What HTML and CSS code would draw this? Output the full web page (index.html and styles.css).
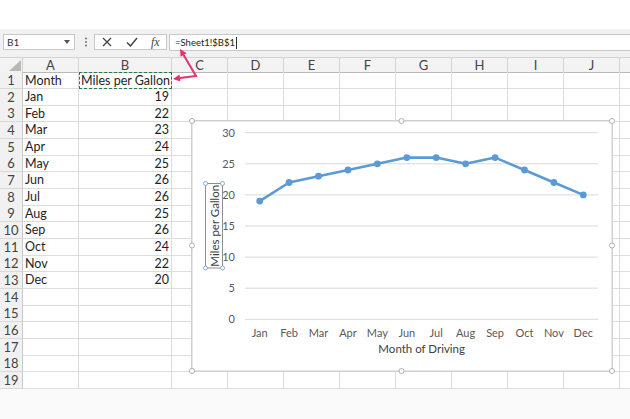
FILE: index.html
```html
<!DOCTYPE html>
<html>
<head>
<meta charset="utf-8">
<title>Miles per Gallon</title>
<link rel="stylesheet" href="styles.css">
</head>
<body>
<div class="topband"></div>
<div class="fbar">
  <div class="namebox"><span>B1</span><svg class="dd" width="6" height="4" viewBox="0 0 6 4"><path d="M0 0h6L3 4z" fill="#555"/></svg></div>
  <svg class="vdots" width="4" height="10" viewBox="0 0 4 10"><circle cx="2" cy="1.5" r="0.9" fill="#666"/><circle cx="2" cy="5" r="0.9" fill="#666"/><circle cx="2" cy="8.5" r="0.9" fill="#666"/></svg>
  <div class="btns">
    <svg class="ico" width="10" height="10" viewBox="0 0 10 10"><path d="M1 1L9 9M9 1L1 9" stroke="#444" stroke-width="1.3" fill="none"/></svg>
    <svg class="ico" width="12" height="10" viewBox="0 0 12 10"><path d="M1 5.5L4.5 9L11 1" stroke="#444" stroke-width="1.5" fill="none"/></svg>
    <span class="fx">fx</span>
  </div>
  <div class="formula"><span>=Sheet1!$B$1</span><span class="caret"></span></div>
</div>
<div class="sheet">
  <div class="row hdr">
    <div class="corner"><svg width="12" height="11" viewBox="0 0 12 11"><path d="M12 0V11H0z" fill="#b9b9b9"/></svg></div>
    <div class="ch">A</div>
    <div class="ch">B</div>
    <div class="chs"><span>C</span><span>D</span><span>E</span><span>F</span><span>G</span><span>H</span><span>I</span><span>J</span></div>
  </div>
  <div class="row"><div class="rh">1</div><div class="c">Month</div><div class="c sel">Miles per Gallon</div><div class="rest"></div></div>
  <div class="row"><div class="rh">2</div><div class="c">Jan</div><div class="c num">19</div><div class="rest"></div></div>
  <div class="row"><div class="rh">3</div><div class="c">Feb</div><div class="c num">22</div><div class="rest"></div></div>
  <div class="row"><div class="rh">4</div><div class="c">Mar</div><div class="c num">23</div><div class="rest"></div></div>
  <div class="row"><div class="rh">5</div><div class="c">Apr</div><div class="c num">24</div><div class="rest"></div></div>
  <div class="row"><div class="rh">6</div><div class="c">May</div><div class="c num">25</div><div class="rest"></div></div>
  <div class="row"><div class="rh">7</div><div class="c">Jun</div><div class="c num">26</div><div class="rest"></div></div>
  <div class="row"><div class="rh">8</div><div class="c">Jul</div><div class="c num">26</div><div class="rest"></div></div>
  <div class="row"><div class="rh">9</div><div class="c">Aug</div><div class="c num">25</div><div class="rest"></div></div>
  <div class="row"><div class="rh">10</div><div class="c">Sep</div><div class="c num">26</div><div class="rest"></div></div>
  <div class="row"><div class="rh">11</div><div class="c">Oct</div><div class="c num">24</div><div class="rest"></div></div>
  <div class="row"><div class="rh">12</div><div class="c">Nov</div><div class="c num">22</div><div class="rest"></div></div>
  <div class="row"><div class="rh">13</div><div class="c">Dec</div><div class="c num">20</div><div class="rest"></div></div>
  <div class="row"><div class="rh">14</div><div class="c"></div><div class="c"></div><div class="rest"></div></div>
  <div class="row"><div class="rh">15</div><div class="c"></div><div class="c"></div><div class="rest"></div></div>
  <div class="row"><div class="rh">16</div><div class="c"></div><div class="c"></div><div class="rest"></div></div>
  <div class="row"><div class="rh">17</div><div class="c"></div><div class="c"></div><div class="rest"></div></div>
  <div class="row"><div class="rh">18</div><div class="c"></div><div class="c"></div><div class="rest"></div></div>
  <div class="row"><div class="rh">19</div><div class="c"></div><div class="c"></div><div class="rest"></div></div>
</div>
<div class="below"></div>

<div class="chart">
  <svg class="chartsvg" width="422" height="252" viewBox="0 0 422 252">
    <rect x="0.75" y="0.75" width="420.5" height="250.5" fill="#fff" stroke="#cfcfcf" stroke-width="1.5"/>
    <g stroke="#d9d9d9" stroke-width="1">
      <line x1="54" x2="407" y1="12.7" y2="12.7"/>
      <line x1="54" x2="407" y1="43.8" y2="43.8"/>
      <line x1="54" x2="407" y1="74.9" y2="74.9"/>
      <line x1="54" x2="407" y1="106" y2="106"/>
      <line x1="54" x2="407" y1="137.1" y2="137.1"/>
      <line x1="54" x2="407" y1="168.2" y2="168.2"/>
      <line x1="54" x2="407" y1="199.3" y2="199.3"/>
    </g>
    <g class="ylab" text-anchor="end">
      <text x="44" y="16.7">30</text>
      <text x="44" y="47.8">25</text>
      <text x="44" y="78.9">20</text>
      <text x="44" y="110">15</text>
      <text x="44" y="141.1">10</text>
      <text x="44" y="172.2">5</text>
      <text x="44" y="203.3">0</text>
    </g>
    <g class="xlab" text-anchor="middle">
      <text x="68.7" y="216.5">Jan</text>
      <text x="98.1" y="216.5">Feb</text>
      <text x="127.5" y="216.5">Mar</text>
      <text x="157" y="216.5">Apr</text>
      <text x="186.4" y="216.5">May</text>
      <text x="215.8" y="216.5">Jun</text>
      <text x="245.2" y="216.5">Jul</text>
      <text x="274.6" y="216.5">Aug</text>
      <text x="304.1" y="216.5">Sep</text>
      <text x="333.5" y="216.5">Oct</text>
      <text x="362.9" y="216.5">Nov</text>
      <text x="392.3" y="216.5">Dec</text>
    </g>
    <text class="xtitle" x="230.7" y="233" text-anchor="middle">Month of Driving</text>
    <polyline fill="none" stroke="#5b9bd5" stroke-width="2.6" stroke-linejoin="round" points="68.7,81.1 98.1,62.5 127.5,56.2 157,50 186.4,43.8 215.8,37.6 245.2,37.6 274.6,43.8 304.1,37.6 333.5,50 362.9,62.5 392.3,74.9"/>
    <g fill="#5b9bd5">
      <circle cx="68.7" cy="81.1" r="3.4"/>
      <circle cx="98.1" cy="62.5" r="3.4"/>
      <circle cx="127.5" cy="56.2" r="3.4"/>
      <circle cx="157" cy="50" r="3.4"/>
      <circle cx="186.4" cy="43.8" r="3.4"/>
      <circle cx="215.8" cy="37.6" r="3.4"/>
      <circle cx="245.2" cy="37.6" r="3.4"/>
      <circle cx="274.6" cy="43.8" r="3.4"/>
      <circle cx="304.1" cy="37.6" r="3.4"/>
      <circle cx="333.5" cy="50" r="3.4"/>
      <circle cx="362.9" cy="62.5" r="3.4"/>
      <circle cx="392.3" cy="74.9" r="3.4"/>
    </g>
    <rect x="14.5" y="63.5" width="17" height="84.5" fill="#fff" stroke="#8f8f8f" stroke-width="1"/>
    <text class="ytitle" transform="translate(23 105.7) rotate(-90)" text-anchor="middle" dominant-baseline="central">Miles per Gallon</text>
    <g fill="#fff" stroke="#7d9ec4" stroke-width="0.9">
      <circle cx="14.5" cy="63.5" r="2"/>
      <circle cx="31.5" cy="63.5" r="2"/>
      <circle cx="14.5" cy="148" r="2"/>
      <circle cx="31.5" cy="148" r="2"/>
    </g>
    <g fill="#fff" stroke="#a8a8a8" stroke-width="0.9">
      <circle cx="1" cy="1" r="2.5"/>
      <circle cx="210.5" cy="1" r="2.5"/>
      <circle cx="421" cy="1" r="2.5"/>
      <circle cx="1" cy="125.5" r="2.5"/>
      <circle cx="421" cy="125.5" r="2.5"/>
      <circle cx="1" cy="251" r="2.5"/>
      <circle cx="210.5" cy="251" r="2.5"/>
      <circle cx="421" cy="251" r="2.5"/>
    </g>
  </svg>
</div>

<svg class="arrow" width="40" height="42" viewBox="0 0 40 42">
  <path d="M18.6 11L31 32L14.9 34.1" fill="none" stroke="#e2336b" stroke-width="2" stroke-linejoin="miter"/>
  <path d="M15 5L21.6 9.2L15.6 12.8z" fill="#e2336b"/>
  <path d="M8 35L15.4 37.6L14.5 30.6z" fill="#e2336b"/>
</svg>
</body>
</html>
```

FILE: styles.css
```css
* { box-sizing: border-box; margin: 0; padding: 0; }
html, body { width: 630px; height: 419px; overflow: hidden; background: #fff; }
body { position: relative; font-family: Lato, "Liberation Sans", sans-serif; color: #222; }

.topband { height: 29px; background: #fff; }

.fbar {
  height: 28px;
  background: #f1f1f1;
  display: flex;
  align-items: flex-start;
  padding: 5px 0 0 3px;
}
.namebox {
  width: 72px; height: 16px;
  background: #fff;
  border: 1px solid #c9c9c9;
  display: flex; align-items: center; justify-content: space-between;
  padding: 0 4px 0 3px;
  font-size: 10px; color: #333;
}
.vdots { margin: 3px 0 0 9px; }
.btns {
  margin-left: 6px;
  width: 73px; height: 16px;
  background: #fff;
  border: 1px solid #c9c9c9;
  display: flex; align-items: center;
  padding-left: 7px; gap: 14px;
}
.fx { font-family: "Liberation Serif", serif; font-style: italic; font-size: 12px; color: #444; margin-left: -1px; }
.formula {
  margin-left: 2px;
  flex: 1; height: 17px;
  background: #fff;
  border: 1px solid #c9c9c9; border-right: none;
  display: flex; align-items: center;
  padding-left: 5px;
  font-size: 9.5px; color: #222;
}
.caret { width: 1px; height: 12px; background: #333; margin-left: 1px; }

.sheet { display: flex; flex-direction: column; }
.row {
  display: grid;
  grid-template-columns: 23px 56px 93px 1fr;
  height: 16.67px;
  font-size: 12.5px;
}
.row.hdr { height: 15px; background: #f3f3f3; border-top: 1px solid #d2d2d2; color: #444; font-size: 13px; }
.corner { border-right: 1px solid #cfcfcf; border-bottom: 1px solid #b8b8b8; display: flex; align-items: flex-end; justify-content: flex-end; padding: 0 1px 1px 0; }
.ch { border-right: 1px solid #d6d6d6; border-bottom: 1px solid #b8b8b8; display: flex; align-items: center; justify-content: center; line-height: 14px; }
.chs { display: flex; border-bottom: 1px solid #b8b8b8; }
.chs span { flex: 0 0 56px; border-right: 1px solid #d6d6d6; display: flex; align-items: center; justify-content: center; line-height: 14px; }

.rh {
  background: #f1f1f1;
  border-right: 1px solid #c9c9c9;
  border-bottom: 1px solid #d9d9d9;
  color: #444; font-size: 13px;
  display: flex; align-items: center; justify-content: center;
}
.c {
  border-right: 1px solid #dcdcdc;
  border-bottom: 1px solid #dcdcdc;
  display: flex; align-items: center;
  padding: 0 2px;
  white-space: nowrap; overflow: visible;
  color: #1e1e1e;
}
.c.num { justify-content: flex-end; }
.c.sel { outline: 1px dashed #2b7a4b; outline-offset: -1px; }
.rest {
  border-bottom: 1px solid #dcdcdc;
  background: repeating-linear-gradient(to right, transparent 0 55px, #dcdcdc 55px 56px);
}
.below { height: 40px; background: #fafafa; }

.chart { position: absolute; left: 191px; top: 120px; width: 422px; height: 252px; }
.chartsvg { display: block; overflow: visible; }
.ylab text, .xlab text { font-family: Lato, "Liberation Sans", sans-serif; font-size: 11px; fill: #595959; }
.xtitle { font-family: Lato, "Liberation Sans", sans-serif; font-size: 11.5px; fill: #404040; }
.ytitle { font-family: Lato, "Liberation Sans", sans-serif; font-size: 11.5px; fill: #404040; }

.arrow { position: absolute; left: 165px; top: 44px; }
```
